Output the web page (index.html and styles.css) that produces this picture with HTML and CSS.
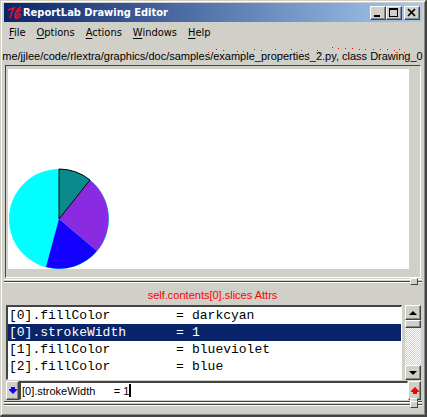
FILE: index.html
```html
<!DOCTYPE html>
<html lang="en">
<head>
<meta charset="utf-8">
<title>ReportLab Drawing Editor</title>
<link rel="stylesheet" href="styles.css">
</head>
<body>
<main class="window">
  <header class="titlebar">
    <svg class="logo" viewBox="0 0 16 16" aria-hidden="true">
      <path d="M1 5 7 3 5 7 3 13M14 2C10 4 8 8 8 13M8 13 11 9 13 9 13 11 11 13 8 13M10 7 14 5" fill="none" stroke="#f01020" stroke-width="1.5"/>
    </svg>
    <h1 class="title">ReportLab Drawing Editor</h1>
    <div class="window-buttons">
      <button class="raised" aria-label="Minimize"><svg viewBox="0 0 14 12"><path d="M3 8H9V10H3Z"/></svg></button>
      <button class="raised" aria-label="Maximize"><svg viewBox="0 0 14 12"><path d="M2 1H11V10H2ZM3 3V9H10V3Z" fill-rule="evenodd"/></svg></button>
      <button class="raised close" aria-label="Close"><svg viewBox="0 0 14 12"><path d="M3 2 10 9M10 2 3 9" fill="none" stroke="#000" stroke-width="1.7"/></svg></button>
    </div>
  </header>
  <nav class="menu">
    <button><u>F</u>ile</button>
    <button><u>O</u>ptions</button>
    <button><u>A</u>ctions</button>
    <button><u>W</u>indows</button>
    <button><u>H</u>elp</button>
  </nav>
  <div class="path">
    <span>me/jjlee/code/rlextra/graphics/doc/samples/example_properties_2.py, class Drawing_0</span>
    <svg class="specks" viewBox="0 0 202 8" aria-hidden="true"><path d="M0 5h1v1h-1zM8 2h1v1h-1zM15 3h1v1h-1zM29 4h1v1h-1zM35 4h1v1h-1zM46 2h1v1h-1zM53 3h1v1h-1zM67 2h1v1h-1zM74 7h1v1h-1zM83 2h1v1h-1zM93 3h1v1h-1zM100 6h1v1h-1zM109 3h1v1h-1zM111 6h1v1h-1zM124 0h1v1h-1zM130 1h1v1h-1zM137 1h1v1h-1zM144 1h1v1h-1zM151 2h1v1h-1zM157 2h1v1h-1zM165 2h1v1h-1zM172 2h1v1h-1zM179 2h1v1h-1zM186 3h1v1h-1zM191 2h1v1h-1zM196 5h1v1h-1zM201 6h1v1h-1z" fill="#f00"/></svg>
  </div>
  <section class="canvas">
    <div class="paper">
      <svg class="pie" viewBox="0 0 102 101" role="img" aria-label="Pie chart">
        <circle cx="51" cy="51" r="50" fill="#0ff"/>
        <path d="M51 51 89 83A50 50 0 0 1 38 99Z" fill="#1400ff"/>
        <path d="M51 51 82 12A50 50 0 0 1 89 83Z" fill="#8a2be2"/>
        <path d="M51 51V1A50 50 0 0 1 82 12Z" fill="#0a8a8a" stroke="#000"/>
      </svg>
    </div>
  </section>
  <div class="sash"><i class="grip"></i></div>
  <h2 class="caption">self.contents[0].slices Attrs</h2>
  <section class="attrs">
    <ul class="list" role="listbox" aria-label="Attributes">
      <li role="option"><span>[0].fillColor</span><span>=</span><span>darkcyan</span></li>
      <li role="option" class="selected" aria-selected="true"><span>[0].strokeWidth</span><span>=</span><span>1</span></li>
      <li role="option"><span>[1].fillColor</span><span>=</span><span>blueviolet</span></li>
      <li role="option"><span>[2].fillColor</span><span>=</span><span>blue</span></li>
    </ul>
    <div class="scrollbar">
      <button class="raised arrow" aria-label="Scroll up"><svg viewBox="0 0 8 4"><path d="M0 4 4 0 8 4Z"/></svg></button>
      <div class="thumb raised"></div>
      <div class="track"></div>
      <button class="raised arrow" aria-label="Scroll down"><svg viewBox="0 0 8 4"><path d="M0 0H8L4 4Z"/></svg></button>
    </div>
  </section>
  <form class="editor">
    <button type="button" class="raised step" aria-label="Next attribute"><svg viewBox="0 0 8 7"><path d="M2 0H6V2H8V3L4 7 0 3V2H2Z" fill="#1400ff"/></svg></button>
    <div class="field">
      <input class="value" aria-label="Attribute value" value="[0].strokeWidth&#160;&#160;&#160;&#160;&#160;&#160;= 1">
      <i class="caret"></i>
    </div>
    <button type="button" class="raised step" aria-label="Apply"><svg viewBox="0 0 8 7"><path d="M2 7H6V5H8V4L4 0 0 4V5H2Z" fill="#f00"/></svg></button>
  </form>
  <div class="sash tight"><i class="grip"></i></div>
  <div class="sash tight"><i class="grip"></i></div>
</main>
</body>
</html>
```
FILE: styles.css
```css
* {
  box-sizing: border-box;
}

body {
  margin: 0;
  background: #d1d0c8;
  color: #000;
  font: 11px/14px "Liberation Sans", Arial, sans-serif;
}

button {
  padding: 0;
  border: 0;
  background: none;
  color: inherit;
  font: inherit;
}

.window {
  display: flex;
  flex-direction: column;
  min-height: 100vh;
  padding: 2px 3px 6px 2px;
  border: 1px solid #d1d0c8;
  border-right: 2px solid #444;
  border-bottom: 2px solid #444;
  box-shadow: inset 1px 1px #fff, inset -1px -1px #888;
}

.raised {
  background: #d1d0c8;
  border: 1px solid;
  border-color: #fff #444 #444 #fff;
  box-shadow: inset -1px -1px #888;
}

.titlebar {
  display: flex;
  align-items: center;
  height: 19px;
  margin-left: 1px;
  padding: 0 2px 0 3px;
  background: linear-gradient(90deg, #0a246a, #a6caf0);
  color: #fff;
}

.logo {
  width: 16px;
  height: 16px;
}

.title {
  flex: 1;
  margin: 0;
  font: bold 11px/16px "DejaVu Sans Condensed", "DejaVu Sans", sans-serif;
  white-space: nowrap;
}

.window-buttons {
  display: flex;
}

.window-buttons button {
  width: 16px;
  height: 14px;
}

.window-buttons .close {
  margin-left: 2px;
}

.window-buttons svg {
  display: block;
  width: 14px;
  height: 12px;
}

.menu {
  display: flex;
  gap: 11px;
  padding: 3px 6px;
  font: 11px/16px "DejaVu Sans Condensed", "DejaVu Sans", sans-serif;
}

.menu u {
  text-underline-offset: 2px;
}

.path {
  position: relative;
  display: flex;
  justify-content: center;
  margin-top: 3px;
  line-height: 18px;
  white-space: nowrap;
}

.specks {
  position: absolute;
  top: 0;
  right: 12px;
  width: 202px;
  height: 8px;
}

.canvas {
  margin: 0 1px 0 2px;
  padding: 3px 11px 8px 2px;
  border: 1px solid;
  border-color: #444 #fff #fff #444;
}

.paper {
  display: flex;
  align-items: flex-end;
  height: 200px;
  background: #fff;
}

.pie {
  width: 102px;
  height: 101px;
}

.sash {
  display: flex;
  justify-content: flex-end;
  align-items: center;
  height: 4px;
  margin: 1px 0 0 1px;
  padding-right: 4px;
  border-top: 1px solid #fff;
  background: linear-gradient(#d1d0c8 1px, #444 1px, #444 2px, #fff 2px);
}

.sash.tight {
  height: 3px;
  margin-top: 0;
  border-top: 0;
}

.grip {
  flex: none;
  width: 8px;
  height: 7px;
  background: #d1d0c8;
  border: 1px solid;
  border-color: #fff #444 #444 #fff;
}

.caption {
  margin: 0;
  padding: 6px 0 3px;
  color: #f00;
  font: 11px/13px "Liberation Sans", Arial, sans-serif;
  text-align: center;
}

.attrs {
  display: flex;
  gap: 3px;
  margin: 0 1px 0 3px;
}

.list {
  flex: 1;
  margin: 0;
  padding: 0 0 4px;
  border: 1px solid;
  border-width: 2px 1px 1px 2px;
  border-color: #444 #fff #fff #444;
  background: #fff;
  font: 13px/17px "Liberation Mono", "Courier New", monospace;
  list-style: none;
}

.list li {
  display: grid;
  grid-template-columns: 167px 16px 1fr;
  padding-left: 1px;
}

.list .selected {
  background: #0a246a;
  color: #fff;
}

.scrollbar {
  display: flex;
  flex-direction: column;
  width: 16px;
}

.arrow {
  display: grid;
  place-items: center;
  height: 15px;
}

.arrow svg {
  width: 8px;
  height: 4px;
}

.thumb {
  height: 8px;
}

.track {
  flex: 1;
  background: repeating-conic-gradient(#fff 0 25%, #d1d0c8 0 50%) 0 0 / 2px 2px;
}

.editor {
  display: flex;
  margin: 1px 1px 0 3px;
}

.step {
  display: grid;
  place-items: center;
  width: 13px;
  height: 19px;
}

.step svg {
  width: 8px;
  height: 7px;
}

.field {
  position: relative;
  display: flex;
  flex: 1;
  border: 1px solid;
  border-width: 2px 1px 1px 2px;
  border-color: #444 #fff #fff #444;
  background: #fff;
}

.value {
  flex: 1;
  min-width: 0;
  padding: 0 1px;
  border: 0;
  outline: 0;
  background: none;
  font: 11px/14px "Liberation Sans", Arial, sans-serif;
}

.caret {
  position: absolute;
  top: 1px;
  left: 108px;
  width: 2px;
  height: 13px;
  background: #000;
}
```
